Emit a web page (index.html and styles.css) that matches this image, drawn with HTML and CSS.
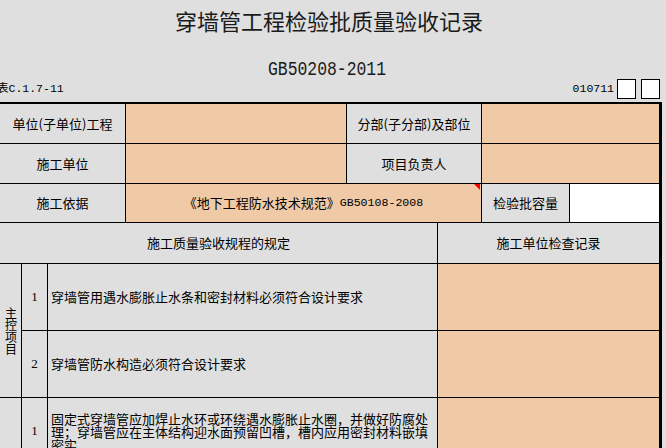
FILE: index.html
```html
<!DOCTYPE html>
<html lang="zh-CN">
<head>
<meta charset="utf-8">
<title>穿墙管工程检验批质量验收记录</title>
<link rel="stylesheet" href="styles.css">
</head>
<body>
<div class="page">
  <h1 class="title">穿墙管工程检验批质量验收记录</h1>
  <div class="code"><span class="code-text">GB50208-2011</span></div>
  <div class="meta">
    <span class="form-no">表C.1.7-11</span>
    <div class="serial">
      <span class="serial-no">010711</span>
      <span class="box"></span>
      <span class="box"></span>
    </div>
  </div>
  <div class="sheet">
    <div class="info">
      <div class="cell label">单位(子单位)工程</div>
      <div class="cell fill"></div>
      <div class="cell label">分部(子分部)及部位</div>
      <div class="cell fill span2 last"></div>

      <div class="cell label">施工单位</div>
      <div class="cell fill"></div>
      <div class="cell label">项目负责人</div>
      <div class="cell fill span2 last"></div>

      <div class="cell label">施工依据</div>
      <div class="cell fill span2 basis">《地下工程防水技术规范》<span class="mono">GB50108-2008</span><span class="flag"></span></div>
      <div class="cell label">检验批容量</div>
      <div class="cell blank last"></div>
    </div>
    <div class="items">
      <div class="cell label head-rule">施工质量验收规程的规定</div>
      <div class="cell label last">施工单位检查记录</div>

      <div class="cell label group-main"><span class="vertical">主控项目</span></div>
      <div class="cell num">1</div>
      <div class="cell text">穿墙管用遇水膨胀止水条和密封材料必须符合设计要求</div>
      <div class="cell fill last"></div>

      <div class="cell num">2</div>
      <div class="cell text">穿墙管防水构造必须符合设计要求</div>
      <div class="cell fill last"></div>

      <div class="cell label group-general"><span class="vertical">一般项目</span></div>
      <div class="cell num">1</div>
      <div class="cell text multi">固定式穿墙管应加焊止水环或环绕遇水膨胀止水圈，并做好防腐处理；穿墙管应在主体结构迎水面预留凹槽，槽内应用密封材料嵌填密实</div>
      <div class="cell fill last"></div>

      <div class="cell num">2</div>
      <div class="cell text multi">套管式穿墙管的套管与止水环及翼环应连续满焊，并做好防腐处理；套管内表面应清理干净，穿墙管与套管之间应用密封材料和橡胶密封圈进行密封处理</div>
      <div class="cell fill last"></div>

      <div class="cell num">3</div>
      <div class="cell text">穿墙管防水层施工前，应将套管内表面清理干净</div>
      <div class="cell fill last"></div>
    </div>
  </div>
</div>
</body>
</html>
```

FILE: styles.css
```css
html, body {
  margin: 0;
  padding: 0;
  background: #dfdfdf;
}

body {
  font-family: "Noto Sans CJK SC", "Liberation Sans", sans-serif;
  color: #000;
}

.page {
  width: 662px;
}

.title {
  margin: 0;
  padding-top: 4px;
  padding-right: 4px;
  font-size: 22px;
  line-height: 32px;
  font-weight: normal;
  text-align: center;
  color: #1a1a1a;
}

.code {
  margin-top: 21px;
  height: 20px;
  padding-right: 8px;
  text-align: center;
  line-height: 20px;
}

.code-text {
  display: inline-block;
  font-family: "Liberation Mono", monospace;
  font-size: 16.4px;
  color: #1a1a1a;
  transform: scaleY(1.25);
}

.meta {
  margin-top: 2px;
  height: 20px;
  display: flex;
  align-items: center;
  justify-content: space-between;
}

.form-no {
  margin-left: -3px;
  font-family: "Liberation Mono", "Noto Sans CJK SC", monospace;
  font-size: 11.5px;
  line-height: 14px;
}

.serial {
  display: flex;
  align-items: center;
  padding-right: 2px;
}

.serial-no {
  font-family: "Liberation Mono", monospace;
  font-size: 11.5px;
  line-height: 14px;
  margin-right: 3px;
}

.box {
  width: 17px;
  height: 18px;
  border: 1px solid #000;
  background: #fff;
}

.box + .box {
  margin-left: 5px;
}

.sheet {
  margin-top: 3px;
  width: 659px;
  border-top: 2px solid #000;
  border-right: 3px solid #000;
}

.info {
  display: grid;
  grid-template-columns: 126px 221px 135px 88px 89px;
  grid-template-rows: 40px 40px 39px;
}

.items {
  display: grid;
  grid-template-columns: 22px 26px 390px 221px;
  grid-template-rows: 41px 67px 67px 67px 67px 67px;
}

.cell {
  box-sizing: border-box;
  border-right: 1px solid #000;
  border-bottom: 1px solid #000;
  display: flex;
  align-items: center;
  justify-content: center;
  font-size: 13px;
  line-height: 16px;
  position: relative;
  min-width: 0;
}

.cell.last {
  border-right: none;
}

.label {
  background: #dfdfdf;
}

.fill {
  background: #f0c9a6;
}

.blank {
  background: #fff;
}

.span2 {
  grid-column: span 2;
}

.basis {
  font-size: 13px;
}

.mono {
  font-family: "Liberation Mono", monospace;
  font-size: 11.6px;
}

.flag {
  position: absolute;
  top: 0;
  right: 1px;
  width: 0;
  height: 0;
  border-top: 6px solid #ff0000;
  border-left: 6px solid transparent;
}

.head-rule {
  grid-column: span 3;
}

.group-main {
  grid-row: span 2;
}

.group-general {
  grid-row: span 3;
}

.vertical {
  writing-mode: vertical-rl;
  text-orientation: upright;
  font-size: 12px;
  line-height: 12px;
  letter-spacing: 0;
}

.num {
  font-family: "Liberation Serif", serif;
  font-size: 13px;
}

.text {
  justify-content: flex-start;
  padding-left: 3px;
  padding-right: 4px;
}

.multi {
  line-height: 13px;
}
```
